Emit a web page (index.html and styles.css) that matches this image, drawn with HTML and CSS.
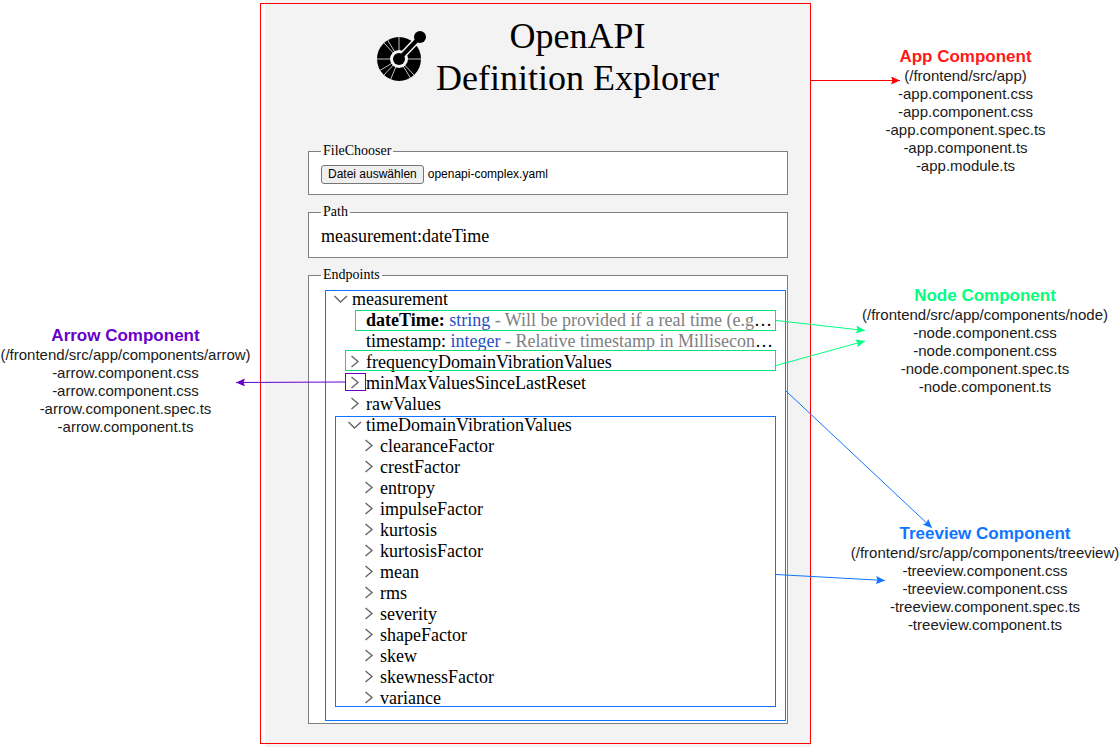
FILE: index.html
```html
<!DOCTYPE html>
<html lang="en">
<head>
<meta charset="utf-8">
<title>OpenAPI Definition Explorer</title>
<link rel="stylesheet" href="styles.css">
</head>
<body>
<svg class="symbols" aria-hidden="true">
  <symbol id="closed" viewBox="0 0 20 21"><path d="M5.5 4 12 9.5 5.5 15"/></symbol>
  <symbol id="open" viewBox="0 0 20 21"><path d="M2.5 7 8.5 13 15 7"/></symbol>
</svg>
<main class="diagram">
  <aside class="notes notes-left">
    <section class="note">
      <h2 class="arrow-name">Arrow Component</h2>
      <p>(/frontend/src/app/components/arrow)</p>
      <p>-arrow.component.css</p>
      <p>-arrow.component.css</p>
      <p>-arrow.component.spec.ts</p>
      <p>-arrow.component.ts</p>
    </section>
  </aside>

  <div class="app">
    <div class="app-frame">
      <header class="header">
        <svg class="logo" viewBox="0 0 64 64" role="img" aria-label="OpenAPI logo">
          <circle cx="29" cy="37" r="22"/>
          <path class="spokes" d="M29 37V14M29 37H6M29 37H52M29 37 13 20M29 37 17 17M29 37 9 49M29 37 13 54M29 37 20 59M29 37 41 57M29 37 45 54"/>
          <path class="arm-gap" d="M29 37 48 17"/>
          <circle class="hub-gap" cx="29" cy="37" r="9"/>
          <path class="arm" d="M29 37 50 15"/>
          <circle cx="29" cy="37" r="6"/>
          <circle cx="50" cy="15" r="6"/>
        </svg>
        <h1>OpenAPI<br>Definition Explorer</h1>
      </header>

      <fieldset>
        <legend>FileChooser</legend>
        <div class="chooser">
          <button type="button" aria-describedby="file-name">Datei auswählen</button>
          <span id="file-name">openapi-complex.yaml</span>
        </div>
      </fieldset>

      <fieldset>
        <legend>Path</legend>
        <div class="path">measurement:dateTime</div>
      </fieldset>

      <fieldset class="endpoints">
        <legend>Endpoints</legend>
        <ul class="tree">
          <li>
            <div class="row"><svg class="twisty"><use href="#open"/></svg>measurement</div>
            <ul>
              <li><div class="row leaf"><b>dateTime:</b> <span class="type">string</span> <span class="desc">- Will be provided if a real time (e.g</span>…</div></li>
              <li><div class="row leaf">timestamp: <span class="type">integer</span> <span class="desc">- Relative timestamp in Millisecon</span>…</div></li>
              <li><div class="row"><svg class="twisty"><use href="#closed"/></svg>frequencyDomainVibrationValues</div></li>
              <li><div class="row"><svg class="twisty"><use href="#closed"/></svg>minMaxValuesSinceLastReset</div></li>
              <li><div class="row"><svg class="twisty"><use href="#closed"/></svg>rawValues</div></li>
              <li>
                <div class="row"><svg class="twisty"><use href="#open"/></svg>timeDomainVibrationValues</div>
                <ul>
                  <li><div class="row"><svg class="twisty"><use href="#closed"/></svg>clearanceFactor</div></li>
                  <li><div class="row"><svg class="twisty"><use href="#closed"/></svg>crestFactor</div></li>
                  <li><div class="row"><svg class="twisty"><use href="#closed"/></svg>entropy</div></li>
                  <li><div class="row"><svg class="twisty"><use href="#closed"/></svg>impulseFactor</div></li>
                  <li><div class="row"><svg class="twisty"><use href="#closed"/></svg>kurtosis</div></li>
                  <li><div class="row"><svg class="twisty"><use href="#closed"/></svg>kurtosisFactor</div></li>
                  <li><div class="row"><svg class="twisty"><use href="#closed"/></svg>mean</div></li>
                  <li><div class="row"><svg class="twisty"><use href="#closed"/></svg>rms</div></li>
                  <li><div class="row"><svg class="twisty"><use href="#closed"/></svg>severity</div></li>
                  <li><div class="row"><svg class="twisty"><use href="#closed"/></svg>shapeFactor</div></li>
                  <li><div class="row"><svg class="twisty"><use href="#closed"/></svg>skew</div></li>
                  <li><div class="row"><svg class="twisty"><use href="#closed"/></svg>skewnessFactor</div></li>
                  <li><div class="row"><svg class="twisty"><use href="#closed"/></svg>variance</div></li>
                </ul>
              </li>
            </ul>
          </li>
        </ul>
      </fieldset>
    </div>
  </div>

  <aside class="notes notes-right">
    <section class="note note-app">
      <h2 class="app-name">App Component</h2>
      <p>(/frontend/src/app)</p>
      <p>-app.component.css</p>
      <p>-app.component.css</p>
      <p>-app.component.spec.ts</p>
      <p>-app.component.ts</p>
      <p>-app.module.ts</p>
    </section>
    <section class="note note-node">
      <h2 class="node-name">Node Component</h2>
      <p>(/frontend/src/app/components/node)</p>
      <p>-node.component.css</p>
      <p>-node.component.css</p>
      <p>-node.component.spec.ts</p>
      <p>-node.component.ts</p>
    </section>
    <section class="note note-tree">
      <h2 class="tree-name">Treeview Component</h2>
      <p>(/frontend/src/app/components/treeview)</p>
      <p>-treeview.component.css</p>
      <p>-treeview.component.css</p>
      <p>-treeview.component.spec.ts</p>
      <p>-treeview.component.ts</p>
    </section>
  </aside>

  <svg class="overlay" viewBox="0 0 1120 747" preserveAspectRatio="none" aria-hidden="true">
    <defs>
      <marker id="head" viewBox="0 0 9 8" refX="9" refY="4" markerWidth="9" markerHeight="8" markerUnits="userSpaceOnUse" orient="auto">
        <path d="M0 0 9 4 0 8 1.5 4Z" fill="context-stroke" stroke="none"/>
      </marker>
    </defs>
    <g class="mark mark-tree">
      <rect x="325.5" y="290.5" width="460" height="430"/>
      <rect x="335.5" y="416.5" width="440" height="290"/>
      <path d="M786 391 932 528"/>
      <path d="M776 574.5 885 580.5"/>
    </g>
    <g class="mark mark-node">
      <rect x="355.5" y="310.5" width="420" height="20"/>
      <rect x="345.5" y="350.5" width="430" height="20"/>
      <path d="M776 320.5 865 330.5"/>
      <path d="M776 365.5 865 341"/>
    </g>
    <g class="mark mark-arrow">
      <rect x="345.5" y="373.5" width="20" height="17"/>
      <path d="M345 382 236 382.5"/>
    </g>
    <g class="mark mark-app"><path d="M811 80.5H900"/></g>
  </svg>
</main>
</body>
</html>
```
FILE: styles.css
```css
* { box-sizing: border-box; }
body { margin: 0; background: #fff; color: #000; }
h1, h2, p, ul { margin: 0; padding: 0; }
ul { list-style: none; }
.symbols { display: none; }

.diagram {
  position: relative;
  display: grid;
  grid-template-columns: 260fr 551fr 309fr;
}

/* Component notes */
.notes {
  font: 15px/18px "Liberation Sans", Arial, sans-serif;
  text-align: center;
  white-space: nowrap;
  color: #1a1a1a;
}
.note h2 { font-size: 17px; line-height: 20px; }
.notes-left { padding: 326px 9px 0 0; }
.notes-right { padding-top: 47px; }
.note-node, .note-tree { padding-left: 39px; }
.note-node { margin-top: 111px; }
.note-tree { margin-top: 128px; }
.app-name { color: #ff1a1a; }
.node-name { color: #00ff80; }
.tree-name { color: #0f75ff; }
.arrow-name { color: #6600cc; }

/* Explorer application */
.app {
  padding: 3px 0;
  background: linear-gradient(to right, #fff 5px, #f3f3f3 5px);
  font: 18px/21px "Liberation Serif", "Times New Roman", serif;
}
.app-frame {
  display: flex;
  flex-direction: column;
  gap: 9px;
  padding: 11px 22px 19px 47px;
  border: 1px solid #f00;
}
.header {
  display: flex;
  align-items: flex-start;
  gap: 2px;
  padding: 0 0 35px 62px;
}
.header h1 {
  font-size: 36px;
  line-height: 42px;
  font-weight: 400;
  text-align: center;
  white-space: nowrap;
}
.logo { flex: none; width: 64px; height: 64px; margin-top: 7px; }
.spokes { stroke: #f3f3f3; stroke-width: 0.8; }
.arm-gap { stroke: #f3f3f3; stroke-width: 7; }
.hub-gap { fill: #f3f3f3; }
.arm { stroke: #000; stroke-width: 4; }

fieldset {
  min-width: 0;
  margin: 0;
  padding: 6px 12px 10px;
  border: 1px solid #808080;
  background: #fff;
}
legend { padding: 0 2px; font-size: 14px; line-height: 16px; }
.chooser {
  display: flex;
  align-items: center;
  gap: 4px;
  font: 12px/15px "Liberation Sans", Arial, sans-serif;
}
.chooser button {
  padding: 1px 6px;
  border: 1px solid #767676;
  border-radius: 3px;
  background: #efefef;
  color: #000;
  font: inherit;
}
.endpoints { padding: 6px 12px 14px; }

.tree { padding-left: 11px; }
.tree ul { padding-left: 14px; }
.row { display: flex; height: 21px; white-space: pre; }
.leaf { display: block; padding-left: 20px; }
.twisty {
  flex: none;
  width: 20px;
  height: 21px;
  fill: none;
  stroke: #666;
  stroke-width: 1.4;
}
.type { color: #1f4fc4; }
.desc { color: #808080; }

/* Outlines and connectors drawn over the application */
.overlay {
  position: absolute;
  top: 0;
  left: 0;
  width: 100%;
  height: 747px;
  pointer-events: none;
}
.mark { fill: none; stroke-width: 1; }
.mark path { marker-end: url(#head); }
.mark-tree { stroke: #0f75ff; }
.mark-node { stroke: #00ff80; }
.mark-node rect { stroke: #0be07a; }
.mark-arrow { stroke: #6600cc; }
.mark-app { stroke: #f00; }
```
